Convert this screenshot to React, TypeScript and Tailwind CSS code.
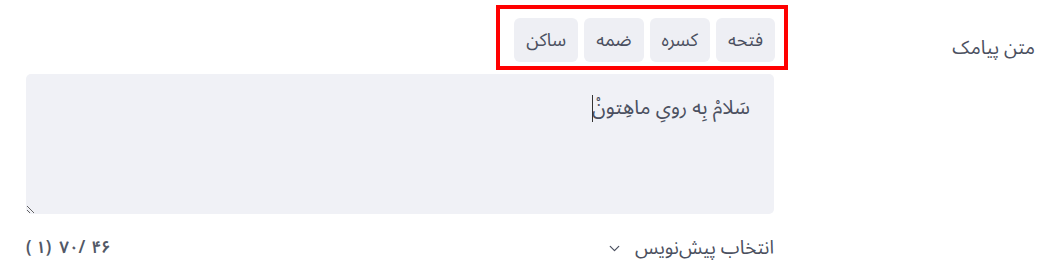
import { ChevronDown } from 'lucide-react'

const marks = ['فتحه', 'کسره', 'ضمه', 'ساکن']

export default function App() {
  return (
    <div
      dir="rtl"
      className="w-[1062px] h-[271px] bg-white text-[#4b5060] font-['Noto_Sans_Arabic','DejaVu_Sans',sans-serif]"
    >
      <div className="flex pr-[27px] pl-[26px]">
        {/* label column */}
        <div className="w-[261px] shrink-0 pt-[34px] text-[19px] leading-[28px]">متن پیامک</div>

        <div className="flex-1">
          {/* diacritic buttons */}
          <div className="flex justify-start mr-[-14px] pt-[5px]">
            <div className="flex gap-[6px] border-4 border-[#ff0000] pt-[9px] pb-[4px] pr-[9px] pl-[14px]">
              {marks.map((m) => (
                <button
                  key={m}
                  className="h-[44px] px-[12px] rounded-[6px] bg-[#eeeff4] text-[18px] text-[#4b5060]"
                >
                  {m}
                </button>
              ))}
            </div>
          </div>

          <div className="relative mt-[4px]">
            <textarea
              defaultValue="سَلامْ بِه رویِ ماهِتونْ"
              className="block w-full h-[140px] rounded-[5px] bg-[#f0f1f6] pt-[19px] pr-[24px] pl-[24px] text-[20px] text-[#4b5060] outline-none"
            />
            {/* text caret */}
            <span className="absolute left-[566px] top-[21px] w-px h-[27px] bg-[#333]" />
          </div>

          <div className="flex items-center justify-between mt-[20px] text-[19px]">
            <div className="flex items-center gap-[12px]">
              <span>انتخاب پیش‌نویس</span>
              <ChevronDown size={17} strokeWidth={1.75} className="text-[#4b5060]" />
            </div>
            <div dir="ltr" className="flex items-center gap-[8px] text-[17px] font-semibold text-[#525866]">
              <span>( ۱)</span>
              <span className="flex gap-[6px]">
                <span>۷۰/</span>
                <span>۴۶</span>
              </span>
            </div>
          </div>
        </div>
      </div>
    </div>
  )
}
